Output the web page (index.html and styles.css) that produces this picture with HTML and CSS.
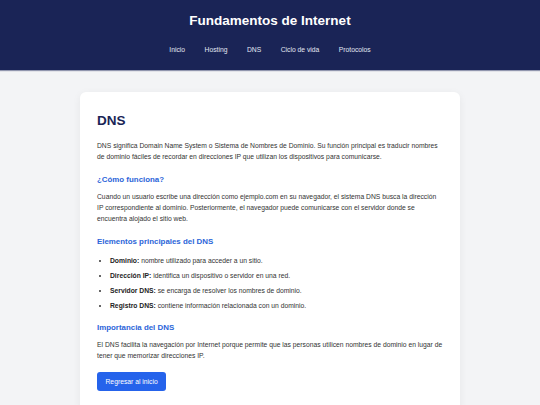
FILE: index.html
```html
<!DOCTYPE html>
<html lang="es">
<head>
    <meta charset="UTF-8">
    <meta name="viewport" content="width=device-width, initial-scale=1.0">
    <title>DNS - Fundamentos de Internet</title>
    <link rel="stylesheet" href="styles.css">
</head>
<body>
    <header class="site-header">
        <h1 class="site-title">Fundamentos de Internet</h1>
        <nav class="main-nav">
            <a href="#">Inicio</a>
            <a href="#">Hosting</a>
            <a href="#">DNS</a>
            <a href="#">Ciclo de vida</a>
            <a href="#">Protocolos</a>
        </nav>
    </header>

    <main class="container">
        <h2 class="page-title">DNS</h2>
        <p>DNS significa Domain Name System o Sistema de Nombres de Dominio. Su función principal es traducir nombres de dominio fáciles de recordar en direcciones IP que utilizan los dispositivos para comunicarse.</p>

        <h3>¿Cómo funciona?</h3>
        <p>Cuando un usuario escribe una dirección como ejemplo.com en su navegador, el sistema DNS busca la dirección IP correspondiente al dominio. Posteriormente, el navegador puede comunicarse con el servidor donde se encuentra alojado el sitio web.</p>

        <h3>Elementos principales del DNS</h3>
        <ul>
            <li><strong>Dominio:</strong> nombre utilizado para acceder a un sitio.</li>
            <li><strong>Dirección IP:</strong> identifica un dispositivo o servidor en una red.</li>
            <li><strong>Servidor DNS:</strong> se encarga de resolver los nombres de dominio.</li>
            <li><strong>Registro DNS:</strong> contiene información relacionada con un dominio.</li>
        </ul>

        <h3>Importancia del DNS</h3>
        <p>El DNS facilita la navegación por Internet porque permite que las personas utilicen nombres de dominio en lugar de tener que memorizar direcciones IP.</p>

        <a href="#" class="btn">Regresar al inicio</a>
    </main>
</body>
</html>
```

FILE: styles.css
```css
body {
    font-family: 'Liberation Sans', Arial, sans-serif;
    background: #f3f4f6;
    color: #333;
    margin: 0;
    padding: 0;
}

.site-header {
    background: #1a2456;
    color: white;
    text-align: center;
    height: 70px;
    box-sizing: border-box;
    padding-top: 13px;
    box-shadow: 0 1px 1px rgba(26, 36, 86, 0.45);
}

.site-title {
    margin: 0;
    font-size: 13.5px;
    line-height: 16px;
}

.main-nav {
    display: flex;
    justify-content: center;
    gap: 19.5px;
    margin-top: 16px;
}

.main-nav a {
    color: #e2e6f2;
    text-decoration: none;
    font-size: 6.75px;
    line-height: 10px;
}

.container {
    background: white;
    max-width: 346px;
    margin: 22px auto 0;
    padding: 21px 17px 20px;
    border-radius: 6px;
    box-shadow: 0 2px 8px rgba(0, 0, 0, 0.06);
}

.page-title {
    margin: 0 0 11px;
    font-size: 13.5px;
    line-height: 1.2;
    color: #1a2456;
}

p {
    margin: 0;
    font-size: 6.75px;
    line-height: 11px;
    color: #333;
}

h3 {
    margin: 12px 0 6px;
    font-size: 7.9px;
    line-height: 11px;
    color: #2b65d9;
}

ul {
    margin: 8px 0 0;
    padding-left: 13px;
}

ul + h3 {
    margin-top: 11px;
}

li {
    font-size: 6.75px;
    line-height: 11px;
    color: #333;
}

li + li {
    margin-top: 4px;
}

li strong {
    color: #222;
}

.btn {
    display: inline-block;
    margin-top: 11px;
    background: #2563eb;
    color: white;
    text-decoration: none;
    font-size: 6.75px;
    line-height: 19px;
    padding: 0 8.5px;
    border-radius: 3px;
}
```
